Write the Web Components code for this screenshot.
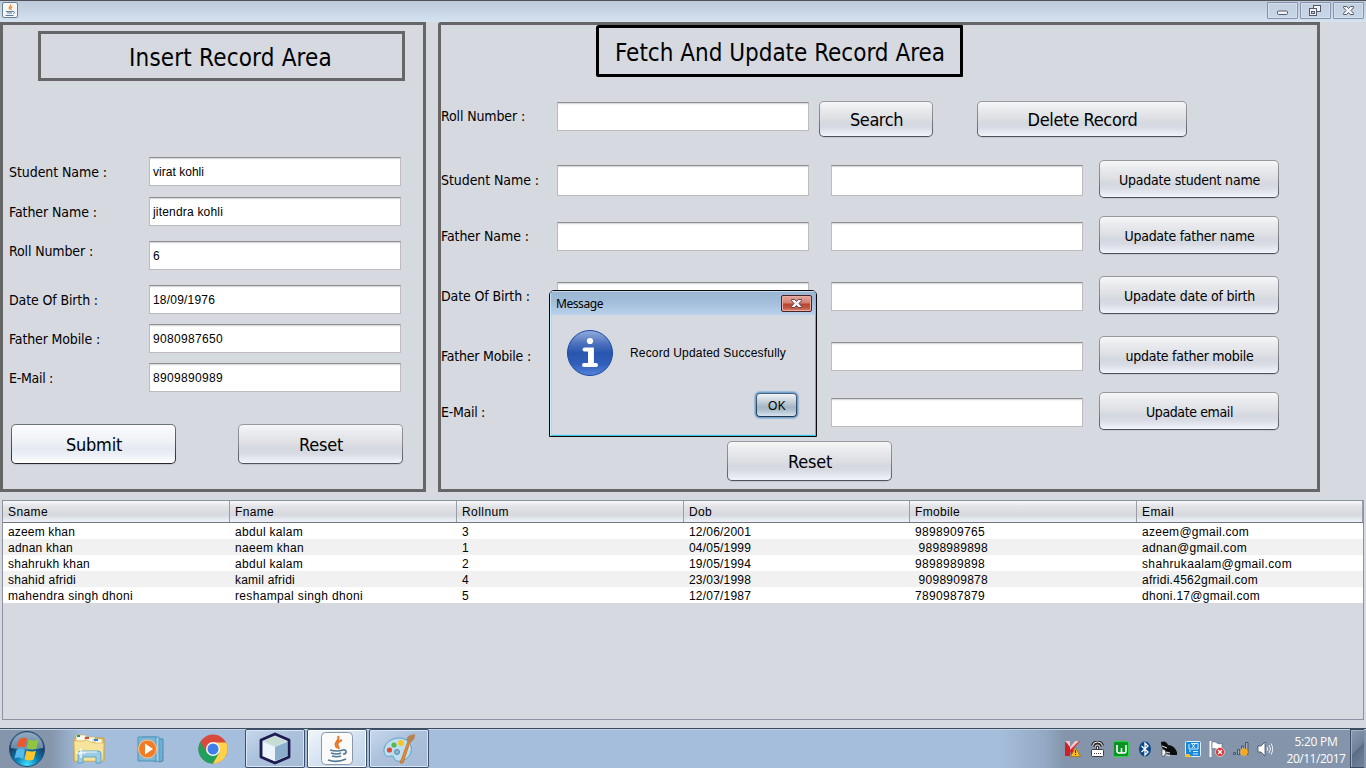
<!DOCTYPE html>
<html lang="en">
<head>
<meta charset="utf-8">
<title>Student Records</title>
<style>
body{margin:0;background:#d6d9e0;overflow:hidden}
</style>
</head>
<body>
<student-app></student-app>
<script>
const define=(name,html,setup)=>{
  const t=document.createElement('template');t.innerHTML=html;
  customElements.define(name,class extends HTMLElement{
    constructor(){super();this.attachShadow({mode:'open'}).append(t.content.cloneNode(true));}
    connectedCallback(){if(setup)setup.call(this,this.shadowRoot);}
  });
};

// Text whose letter spacing is adjusted to reach a given advance width.
define('fit-text',`<style>:host{display:inline-block;white-space:pre;flex:none;justify-self:start}span{display:inline-block}</style><span><slot></slot></span>`,function(root){
  requestAnimationFrame(()=>{
    const w=+this.getAttribute('w'),n=this.textContent.length;
    if(!w||!n)return;
    this.style.letterSpacing=((w-root.querySelector('span').getBoundingClientRect().width)/n)+'px';
  });
});

define('title-bar',`<style>
:host{display:flex;height:22px;box-sizing:border-box;border-top:1px solid #515258;background:linear-gradient(#bccada,#c6d4e4 45%,#d5e3f1);justify-content:space-between;padding:1px 2px 0}
svg{display:block}.b{display:flex;gap:2px}
.b span{width:29px;height:15px;border:1px solid #8492ae;border-radius:1px;box-shadow:inset 0 0 0 1px #d5e0ec;background:linear-gradient(#c1cfdf,#c8d7e7)}
</style>
<svg width="16" height="17" viewBox="0 0 16 17"><rect x=".5" y=".5" width="15" height="15" rx="1.5" fill="#f5f6f7" stroke="#6e7d8c"/><path d="M8.5 2.5c1 2-2.500 2-1 5M10.500 4.500c-2 1-2.500 2-1 3.500" fill="none" stroke="#ef8a26" stroke-width="1.300"/><path d="M4 9.500h7M5 11h5M3.500 13.500h8M11 9.500c2-.5 2 2 0 2" fill="none" stroke="#5d7d99"/></svg>
<div class="b"><span><svg width="29" height="15"><rect x="9.500" y="8" width="10" height="3.500" rx="1" fill="#f4f4f6" stroke="#555a6b"/></svg></span><span><svg width="29" height="15"><rect x="12.500" y="2.500" width="7" height="6" fill="#f2f3f6" stroke="#555a6b"/><rect x="8.500" y="5.500" width="7" height="7" fill="#f2f3f6" stroke="#555a6b"/><rect x="10.500" y="8.500" width="3" height="2" fill="#ccd4df" stroke="#555a6b"/></svg></span><span><svg width="29" height="15"><path d="M9.500 3.500h3.200l1.800 2 1.800-2h3.200v1.200l-2.500 2.800 2.500 2.800v1.200h-3.200l-1.800-2-1.800 2H9.500v-1.200L12 7.500 9.500 4.700z" fill="#f4f4f6" stroke="#555a6b"/></svg></span></div>`);

define('text-field',`<style>
:host{display:flex;align-items:center;box-sizing:border-box;width:252px;height:29px;background:linear-gradient(#c9c9c9,#ededed 1px,#fff 2px);border:1px solid #bcbcbc;border-top-color:#8d8e90;padding-left:3px;font:12px "Liberation Sans",Arial,sans-serif;color:#000}
</style><slot></slot>`);

define('nim-button',`<style>
:host{display:flex;align-items:center;justify-content:center;box-sizing:border-box;height:38px;border-radius:5px;padding:1px;background:linear-gradient(#97999e,#85878c 50%,#505156);box-shadow:0 1px 0 #c3c6cd;font:14px "DejaVu Sans Condensed","DejaVu Sans",sans-serif;color:#000}
div{width:100%;height:100%;box-sizing:border-box;padding:1px 0 0 1px;display:flex;align-items:center;justify-content:center;border-radius:4px;background:linear-gradient(#f6f7f9,#e8eaed 22%,#dfe1e5 45%,#d5d8df 62%,#d8dbe3 75%,#f1f4fa)}
:host([big]){font-size:18px}
:host([big]) div{padding-top:0}
:host([hot]){background:linear-gradient(#70737a,#505258 50%,#26272b)}
:host([hot]) div{background:linear-gradient(#fcfcfe,#eef1f5 45%,#e5e9f1 62%,#e9edf4 75%,#fff)}
:host([ok]){padding:1px;border-radius:4px;font:12px "Liberation Sans",Arial,sans-serif;background:linear-gradient(#49657d,#23374a);box-shadow:0 0 0 1px #72a2cd,0 0 1px 2px #98bbdc}
:host([ok]) div{padding:2px 0 0 1px;background:linear-gradient(#f0f4f7,#c5d0da 35%,#a4b5c5 60%,#aebfce 75%,#d7e4ef);border-radius:3px}
</style><div><slot></slot></div>`);

define('record-panel',`<style>
:host{display:flex;flex-direction:column;box-sizing:border-box;height:470px;border:3px solid #666;font:14px "DejaVu Sans Condensed","DejaVu Sans",sans-serif;color:#000}
:host([round]){border-top-left-radius:3px}
</style><slot></slot>`);

define('panel-title',`<style>
:host{display:flex;align-items:center;box-sizing:border-box;width:367px;border:3px solid #666;padding-top:4px;font:24px "DejaVu Sans Condensed","DejaVu Sans",sans-serif}
:host([dark]){border-color:#000;border-radius:3px 1px 1px 2px}
</style><slot></slot>`);

define('insert-area',`<style>
:host{display:block;width:426px;flex:none}
panel-title{height:50px;margin:6px 0 0 35px}
panel-title fit-text{margin-left:88px}
.r{display:grid;grid-template-columns:140px 252px;align-items:center;padding-left:6px;height:29px}
.btns{display:flex;gap:62px;padding-left:8px;margin-top:32px}
.btns nim-button{width:165px;height:40px}
</style>
<record-panel><panel-title><fit-text w="203">Insert Record Area</fit-text></panel-title>
<div class="r" style="margin-top:76px"><fit-text w="98">Student Name :</fit-text><text-field><fit-text w="51">virat kohli</fit-text></text-field></div>
<div class="r" style="margin-top:11px"><fit-text w="88">Father Name :</fit-text><text-field><fit-text w="70">jitendra kohli</fit-text></text-field></div>
<div class="r" style="margin-top:15px"><fit-text w="84" style="padding-bottom:9px">Roll Number :</fit-text><text-field>6</text-field></div>
<div class="r" style="margin-top:15px"><fit-text w="89">Date Of Birth :</fit-text><text-field><fit-text w="62">18/09/1976</fit-text></text-field></div>
<div class="r" style="margin-top:10px"><fit-text w="91">Father Mobile :</fit-text><text-field><fit-text w="70">9080987650</fit-text></text-field></div>
<div class="r" style="margin-top:10px"><fit-text w="44">E-Mail :</fit-text><text-field><fit-text w="70">8909890989</fit-text></text-field></div>
<div class="btns"><nim-button big hot><fit-text w="56">Submit</fit-text></nim-button><nim-button big><fit-text w="44">Reset</fit-text></nim-button></div>
</record-panel>`);

define('update-area',`<style>
:host{display:block;width:882px;flex:none}
panel-title{height:52px;margin-left:155px}
panel-title fit-text{margin-left:16px}
.r{display:grid;grid-template-columns:116px 252px 252px 180px;column-gap:0;height:38px;align-items:center}
.r>fit-text{padding-top:2px}
.r text-field{margin-top:3px}
.r text-field:nth-child(3){margin-left:22px}
.r nim-button{margin-left:38px;width:180px}
.s{display:flex;margin-top:24px;height:36px}
.s div{width:116px;line-height:30px}
.s text-field{margin:1px 10px 0 0}
.s nim-button{height:36px}
</style>
<record-panel round><panel-title dark><fit-text w="330">Fetch And Update Record Area</fit-text></panel-title>
<div class="s"><div><fit-text w="84">Roll Number :</fit-text></div><text-field></text-field><nim-button big style="width:114px"><fit-text w="53">Search</fit-text></nim-button><nim-button big style="width:210px;margin-left:44px"><fit-text w="110">Delete Record</fit-text></nim-button></div>
<div class="r" style="margin-top:23px"><fit-text w="98">Student Name :</fit-text><text-field style="height:31px"></text-field><text-field style="height:31px"></text-field><nim-button><fit-text w="141">Upadate student name</fit-text></nim-button></div>
<div class="r" style="margin-top:18px"><fit-text w="88">Father Name :</fit-text><text-field></text-field><text-field></text-field><nim-button><fit-text w="130">Upadate father name</fit-text></nim-button></div>
<div class="r" style="margin-top:22px"><fit-text w="89">Date Of Birth :</fit-text><text-field></text-field><text-field></text-field><nim-button><fit-text w="131">Upadate date of birth</fit-text></nim-button></div>
<div class="r" style="margin-top:22px"><fit-text w="90">Father Mobile :</fit-text><text-field></text-field><text-field></text-field><nim-button><fit-text w="128">update father mobile</fit-text></nim-button></div>
<div class="r" style="margin-top:18px"><fit-text w="44">E-Mail :</fit-text><text-field></text-field><text-field></text-field><nim-button><fit-text w="87">Upadate email</fit-text></nim-button></div>
<nim-button big style="width:165px;height:40px;margin:11px 0 0 286px"><fit-text w="44">Reset</fit-text></nim-button>
</record-panel>`);

define('record-table',`<style>
:host{display:block;box-sizing:border-box;width:1362px;height:220px;border:1px solid #8e929d;font:12px/18px "Liberation Sans",Arial,sans-serif;color:#000}
.row{display:grid;grid-template-columns:227px 227px 227px 226px 227px 1fr;height:16px;background:#fff}
.row:nth-child(odd){background:#f1f1f1}
.row:first-child{height:22px;line-height:22px;box-sizing:border-box;border-bottom:1px solid #73757e;background:linear-gradient(#f7f8fa,#e3e4e8 25%,#dcdde1 50%,#d5d8df 65%,#eff2f8)}
.row div{padding-left:5px;height:16px}
.row:first-child div{height:21px;border-right:1px solid #9a9da6}
</style><section></section>`,function(root){
  const rows=[
    [['Sname',40],['Fname',39],['Rollnum',47],['Dob',23],['Fmobile',45],['Email',32]],
    [['azeem khan',67],['abdul kalam',68],['3',7],['12/06/2001',62],['9898909765',70],['azeem@gmail.com',107]],
    [['adnan khan',65],['naeem khan',69],['1',7],['04/05/1999',62],[' 9898989898',73],['adnan@gmail.com',105]],
    [['shahrukh khan',82],['abdul kalam',68],['2',7],['19/05/1994',62],['9898989898',70],['shahrukaalam@gmail.com',150]],
    [['shahid afridi',68],['kamil afridi',60],['4',7],['23/03/1998',62],[' 9098909878',73],['afridi.4562gmail.com',116]],
    [['mahendra singh dhoni',125],['reshampal singh dhoni',128],['5',7],['12/07/1987',62],['7890987879',70],['dhoni.17@gmail.com',118]]];
  root.querySelector('section').innerHTML=rows.map(r=>'<div class="row">'+r.map(([t,w])=>`<div><fit-text w="${w}">${t}</fit-text></div>`).join('')+'</div>').join('');
});

define('message-dialog',`<style>
:host{display:block;position:absolute;left:549px;top:290px;width:268px;height:147px;box-sizing:border-box;border:1px solid #0a0a0c;border-radius:5px 5px 0 0;background:#d6d9e0;box-shadow:inset 1px 0 #c4f0fb,inset -1px -1px #39c5de,inset 2px -2px #bdd3ee;overflow:hidden;font:12px "Liberation Sans",Arial,sans-serif;color:#000}
.t{display:flex;justify-content:space-between;height:24px;box-sizing:border-box;padding:4px 4px 0 6px;background:linear-gradient(#9ab5d1,#a1bcd8 40%,#b9d1eb);box-shadow:inset 0 1px #c6d8e8,inset 1px 0 #c4e4f6,inset -1px 0 #5acde4;font:12px/18px "Noto Sans","Open Sans",sans-serif}
.c{width:29px;height:15px;border:1px solid #4c2029;border-radius:2px;box-shadow:inset 0 0 0 1px #e8aca2;background:linear-gradient(#e4a59a,#d37f70 48%,#b84430 52%,#bf5140 75%,#d8826b)}
svg{display:block}
.m{display:flex;padding:15px 0 0 17px;height:46px;align-items:center}
.m fit-text{margin-left:17px}
nim-button{width:41px;height:24px;margin:17px 0 0 206px}
</style>
<div class="t"><fit-text w="47">Message</fit-text><span class="c"><svg width="29" height="15"><path d="M9.500 3.500h3.200l1.800 2 1.800-2h3.200v1.200l-2.500 2.800 2.500 2.800v1.200h-3.200l-1.800-2-1.800 2H9.500v-1.200L12 7.500 9.500 4.700z" fill="#f5f5f7" stroke="#5a4654"/></svg></span></div>
<div class="m"><svg width="46" height="46" viewBox="0 0 46 46"><defs><linearGradient id="g" x2="0" y2="1"><stop stop-color="#95aedd"/><stop offset=".3" stop-color="#4a70bd"/><stop offset=".5" stop-color="#2855ae"/><stop offset=".75" stop-color="#325fba"/><stop offset="1" stop-color="#5584dc"/></linearGradient></defs><circle cx="23" cy="23" r="22.500" fill="url(#g)" stroke="#1c489f"/><circle cx="23" cy="11" r="3.100" fill="#fff"/><path d="M17.500 19.500h7.300v14M17 35h12" fill="none" stroke="#fff" stroke-width="4" stroke-linecap="round"/><path d="M21 19h5.500v16H21z" fill="#fff"/></svg><fit-text w="156">Record Updated Succesfully</fit-text></div>
<nim-button ok><fit-text w="18">OK</fit-text></nim-button>`);

define('task-bar',`<style>
:host{display:flex;box-sizing:border-box;height:40px;border-top:1px solid #3e4c60;box-shadow:inset 0 1px #c3d2e3;background:linear-gradient(90deg,#8495ac 0,#8495ac 50px,#a5bedb 82px,#a5bedb 1000px,#93a9c4 1045px,#8394ab 1066px);color:#fff;font:12px/17px "Open Sans","Noto Sans",sans-serif}
svg{display:block;flex:none}
.l{display:flex;width:430px;flex:none}
.p{width:62px;height:39px;display:flex;align-items:center;justify-content:center;flex:none}
.w{box-sizing:border-box;width:60px;margin-right:2px;border:1px solid #3c506b;border-radius:2px;box-shadow:inset 0 0 0 1px #d9e7f5;background:linear-gradient(145deg,#c7d8eb,#abc1dc 45%,#a5bad5)}
.w.on{background:linear-gradient(145deg,#f1f6fb,#d4e2f1 50%,#c2d4e9);box-shadow:inset 0 0 0 1px #fff}
.tray{display:flex;gap:8px;align-items:center;margin-left:635px;flex:none;height:40px}
.clock{width:58px;margin:4px 0 0 14px;display:flex;flex-direction:column;align-items:center;flex:none}
.d{margin-left:5px;width:14px;height:39px;flex:none;box-sizing:border-box;border:1px solid #3c4b60;border-right:0;box-shadow:inset 1px 1px #9eb0c5;background:linear-gradient(135deg,#8a9cb3,#6f8198 50%,#5a6c83 51%,#73869d)}
</style>
<div class="l">
<div class="p" style="width:54px"><svg width="38" height="38" viewBox="0 0 38 38"><defs><radialGradient id="o" cx=".5" cy=".95" r=".9"><stop stop-color="#3fe0ff"/><stop offset=".35" stop-color="#0a83b8"/><stop offset=".7" stop-color="#16406b"/><stop offset="1" stop-color="#557799"/></radialGradient></defs><circle cx="19" cy="19" r="17.500" fill="url(#o)" stroke="#294b70"/><path d="M3 18a16 15.500 0 0 1 32 0Q19 21 3 18z" fill="#dce8f2" opacity=".45"/><path d="M11 9.500q4-3 8-1l-1.800 9q-4-2-8.200.5z" fill="#ee572b"/><path d="M20.500 9.200q4 2.500 10 .3l-2.200 9q-4.300 2-9.300-.5z" fill="#8fc63d"/><path d="M8.500 20q4-2.500 8.500 0l-2 9q-4-2.500-8.500-.5z" fill="#58b9ec"/><path d="M18.500 20.500q4 2 9.500.2l-2.200 8.500q-4.300 2.500-9.300 0z" fill="#fcc52c"/></svg></div>
<div class="p" style="width:70px"><svg width="34" height="34" viewBox="0 0 34 34"><path d="M4 4h9l2 2h17v23H2V8z" fill="#e9ce70" stroke="#c79d37"/><path d="M4 3h10v6H4zM13 5h10v6H13zM21 7h9v6h-9z" fill="#fffbed" stroke="#cba957" stroke-width=".6"/><path d="M5 3h3v2H5z" fill="#13a538"/><path d="M13 5h4v2h-4z" fill="#d24b36"/><path d="M22 7h4v2h-4z" fill="#2c86d9"/><path d="M2 9h10l2-1 8 3h10l-1 18H3z" fill="#f7e49c" stroke="#d9b659" stroke-width=".7"/><path d="M6 31v-9q0-3 3-3h17q3 0 3 3v9h-5v-6H11v6z" fill="#9ccbe4" stroke="#4b9ac3" stroke-width=".8"/><path d="M7 23q0-3 3-3h15" fill="none" stroke="#eefaff"/><path d="M9 16v10M4 21h10" stroke="#fff" stroke-width="1.200"/></svg></div>
<div class="p" style="width:53px"><svg width="30" height="30" viewBox="0 0 30 30"><path d="M9 4l18 1v22l-4 1z" fill="#70add2" stroke="#468db6"/><path d="M6 3h17v24l-4 1z" fill="#a6d2e9" stroke="#529abf"/><path d="M2 3h18v24H2z" fill="#7db7d8" stroke="#4e93b8"/><circle cx="11.500" cy="15" r="9" fill="#f27b25" stroke="#ffc78e"/><path d="M9 9.500l8 5.500-8 5.500z" fill="#fff"/><path d="M23 27l5-2" stroke="#8d9fb8"/></svg></div>
<div class="p" style="width:68px"><svg style="margin-left:4px" width="30" height="30" viewBox="0 0 30 30"><circle cx="15" cy="15" r="14.500" fill="#d9493c"/><path d="M2.400 7.700A14.500 14.500 0 0 0 15 29.500L21.300 18.700 15 15l-6.300 3.600z" fill="#1fa15c"/><path d="M15 29.500A14.500 14.500 0 0 0 28 8.500H15l6.300 10.100z" fill="#ffd24a"/><circle cx="15" cy="15" r="7" fill="#f4f7fa"/><circle cx="15" cy="15" r="5.500" fill="#3e7ee8"/></svg></div>
<div class="p w"><svg width="32" height="33" viewBox="0 0 32 33"><path d="M16 2l14 6v17l-14 6-14-6V8z" fill="#d1e3ec" stroke="#1d1b50" stroke-width="2.800" stroke-linejoin="round"/><path d="M16 4l11 5-11 5L5 9z" fill="#c7ddd4"/><path d="M4 10l12 5v14L4 24z" fill="#edf5fa"/><path d="M28 10l-12 5v14l12-5z" fill="#8aafcd"/></svg></div>
<div class="p w on"><svg width="32" height="33" viewBox="0 0 32 33"><rect x=".5" y=".5" width="31" height="32" rx="4" fill="#fafafa" stroke="#8798aa"/><path d="M17 4c3 5-6 6-1 12M21 8c-6 3-5 4-3 9" fill="none" stroke="#e7772c" stroke-width="2"/><path d="M9 18q7 2 13 0M10 21q6 2 10 0M11 24q5 1.500 9 0M7 28q9 3 18-1M22 18c4-1 4 4 0 4" fill="none" stroke="#527895" stroke-width="1.700"/></svg></div>
<div class="p w" style="margin-right:0"><svg width="34" height="34" viewBox="0 0 34 34"><path d="M2 20C1 13 8 6 17 6s14 7 12 14-9 10-14 9c-4-1-2-6-6-5s-6 0-7-4z" fill="#bedff0" stroke="#5f9fc3"/><circle cx="7.500" cy="18" r="2.600" fill="#e14c38"/><circle cx="12" cy="13" r="2.600" fill="#55b94b"/><circle cx="19" cy="11" r="3" fill="#f6c427"/><circle cx="15" cy="20" r="2.500" fill="#8ab5d2" stroke="#538dae"/><path d="M18 31L26 9l2 1-7 21z" fill="#e98830" stroke="#b55e17" stroke-width=".6"/><path d="M24.500 8q0-5 8.500-6 1 5-5 9z" fill="#b68459"/></svg></div>
</div>
<div class="tray">
<svg width="16" height="16" viewBox="0 0 16 16"><path d="M0 0h5v6l5-6h5L8 8l3 7H7L5 10v5H0z" fill="#da1e28"/><path d="M0 0h5v6l5-6h4L5 9 0 5z" fill="#f4f4f4" opacity=".8"/><path d="M0 0l5 6v9H0z" fill="#cf2029"/><path d="M10.500 6.500l5 9h-10z" fill="#fcbc22" stroke="#9b6b07" stroke-width=".7"/><path d="M10.500 9v3m0 1v1" stroke="#3d2800"/></svg>
<svg width="16" height="16" viewBox="0 0 16 16"><path d="M3.500 5Q4 1 8.500 1t5 4M6 6q0-2 2.500-2T11 6M8.500 6v3" fill="none" stroke="#2c2d30" stroke-width="2.800"/><path d="M3.500 5Q4 1 8.500 1t5 4M6 6q0-2 2.500-2T11 6M8.500 6v3" fill="none" stroke="#f5f5f5"/><rect x="2.500" y="8.500" width="12" height="7" rx="1" fill="#fff" stroke="#3d3d3d"/><path d="M5 12.500h7" stroke="#444" stroke-dasharray="1 1"/></svg>
<svg width="16" height="16" viewBox="0 0 16 16"><rect x=".5" y=".5" width="15" height="15" rx="2" fill="#0b9125" stroke="#19dc35"/><path d="M4 4v6q0 2 2 2h5q2 0 2-2V4M8.500 7v5" fill="none" stroke="#fff" stroke-width="1.600"/></svg>
<svg width="16" height="16" viewBox="0 0 16 16"><ellipse cx="8" cy="8" rx="6" ry="7.500" fill="#0c468b"/><path d="M4.500 5l6.500 6-3 3V2l3 3-6.500 6" fill="none" stroke="#fff" stroke-width="1.300"/></svg>
<svg width="16" height="16" viewBox="0 0 16 16"><path d="M0 1q5-2 7 3 6 0 9 7v3h-5Q4 13 3 9 0 6 0 1z" fill="#0c0c0e"/><path d="M1 8l3 1 1 3-3 4-1-2z" fill="#f4f4f4" stroke="#222" stroke-width=".5"/><path d="M1 5l5 2M5 11l4 1M5 14l4 1" stroke="#e6e6e6"/></svg>
<svg width="16" height="16" viewBox="0 0 16 16"><rect x=".5" y=".5" width="15" height="15" rx="1" fill="#1687dc" stroke="#d9f1ff"/><path d="M4 3v5h9V2.500H6M7 3l3 4m0-4L7 7M8 10.500h5M8 13h5M4 10h2" fill="none" stroke="#d6eefc"/><path d="M0 13h4l3 3H0z" fill="#edc83a"/></svg>
<svg width="16" height="16" viewBox="0 0 16 16"><path d="M1.500 0v16" stroke="#fff" stroke-width="2"/><path d="M3 1q3-1 5 1 3 2 5 0v6q-4 2-6 0-2-1-4 0z" fill="#fff" stroke="#4f6073" stroke-width=".6"/><circle cx="11" cy="11" r="4.500" fill="#dd2e2f" stroke="#fff" stroke-width=".6"/><path d="M9 9l4 4m0-4l-4 4" stroke="#fff" stroke-width="1.400"/></svg>
<svg width="16" height="16" viewBox="0 0 16 16"><path d="M.5 11.500h2v2h-2zM4.500 8.500h2v5h-2zM8.500 5h2v8.500h-2zM12.500 1.500h2.500v12h-2.500z" fill="#a4afbd" stroke="#465567"/><circle cx="11" cy="11" r="3.500" fill="#f6b12b"/><path d="M11 6.500v9M6.500 11h9M8 8l6 6m0-6l-6 6" stroke="#f5a720" stroke-width="1.200"/></svg>
<svg width="16" height="16" viewBox="0 0 16 16"><path d="M1 5h3l4-4v14l-4-4H1z" fill="#fff" stroke="#3f4e60" stroke-width=".8"/><path d="M10 6q1.500 2 0 4M12 4q3 4 0 8M14 2.500q3.500 5.500 0 11" fill="none" stroke="#eef3f8"/></svg>
</div>
<div class="clock"><fit-text w="43">5:20 PM</fit-text><fit-text w="59">20/11/2017</fit-text></div><div class="d"></div>`);

define('student-app',`<style>
:host{display:flex;flex-direction:column;position:relative;width:1366px;height:768px;overflow:hidden;background:#d6d9e0}
.top{display:flex;gap:12px;height:478px;flex:none}
record-table{margin-left:2px;flex:none}task-bar{margin-top:8px;flex:none}
</style>
<title-bar></title-bar><div class="top"><insert-area></insert-area><update-area></update-area></div>
<record-table></record-table><task-bar></task-bar><message-dialog></message-dialog>`);
</script>
</body>
</html>
